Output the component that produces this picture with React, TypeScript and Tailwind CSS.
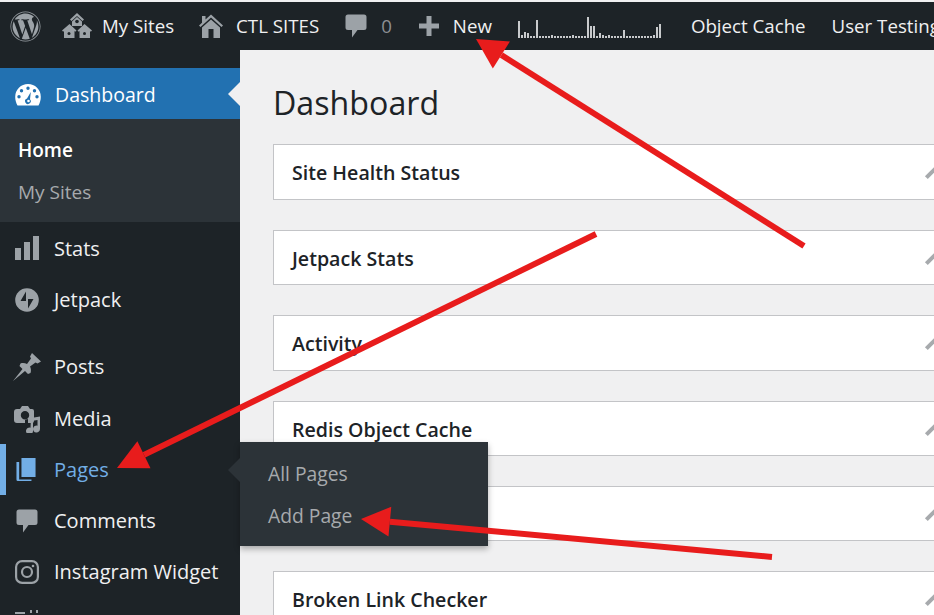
import React from "react";
import { FaWordpress } from "react-icons/fa";

const font = { fontFamily: '"Open Sans", "Noto Sans", sans-serif' };
const bars = [17,3,6,5,2,2,18,2,2,2,2,3,2,2,2,2,2,2,3,2,2,2,2,21,12,12,2,5,3,2,3,2,2,2,2,8,2,2,2,2,2,2,2,2,2,3,11,14];

const Sites = () => (
  <svg width="30" height="26" viewBox="0 0 30 26" fill="#9ca2a7">
    <path d="M15 0l7 6.500-1.500 1.500-5.500-5-5.500 5L8 6.500z" />
    <path d="M15 4l5 4.500V13h-10V8.500z" />
    <circle cx="15" cy="8.500" r="1.800" fill="#1d2327" />
    <path d="M7.500 11l7 6.500-1.200 1.200-.8-.7V25H2v-7l-.8.700L0 17.500z" />
    <path d="M22.500 11l7.500 6.500-1.200 1.200-.8-.7V25H17.500v-7l-.8.700-1.200-1.200z" />
    <rect x="5.500" y="19" width="3" height="3" rx="1.500" fill="#1d2327" />
    <rect x="21" y="19" width="3" height="3" rx="1.500" fill="#1d2327" />
  </svg>
);
const Home = () => (
  <svg width="24" height="24" viewBox="0 0 24 24" fill="#9ca2a7">
    <path d="M12 0.500l12 11-1.500 1.600L12 3.500 1.500 13.100 0 11.500l3-2.700V2h3.500v3.600z" />
    <path d="M12 5.500l9 8V24H3V13.500zM9.500 15v9h5v-9z" fillRule="evenodd" />
  </svg>
);
const Bubble = ({ color = "#9ca2a7" }: { color?: string }) => (
  <svg width="22" height="26" viewBox="0 0 22 25" fill={color}>
    <path d="M3 1h16a2.500 2.500 0 0 1 2.500 2.500v10.500a2.500 2.500 0 0 1-2.500 2.500h-6.500L7 24v-7.500H3A2.500 2.500 0 0 1 .5 14V3.500A2.500 2.500 0 0 1 3 1z" />
  </svg>
);
const Gauge = () => (
  <svg width="26" height="22" viewBox="0 0 26 22" fill="#fff">
    <path fillRule="evenodd" d="M13 0a12.800 12.800 0 0 1 12.800 12.800c0 3.400-.8 6-2.300 8.700H2.500C1 18.800.2 16.200.2 12.800A12.800 12.800 0 0 1 13 0zM13 2.500a1.700 1.700 0 1 0 0 3.400 1.700 1.700 0 0 0 0-3.400zM6.500 5a1.700 1.700 0 1 0 0 3.400 1.700 1.700 0 0 0 0-3.400zM19.500 5a1.700 1.700 0 1 0 0 3.400 1.700 1.700 0 0 0 0-3.400zM4 11a1.700 1.700 0 1 0 0 3.400A1.700 1.700 0 0 0 4 11zM22 11a1.700 1.700 0 1 0 0 3.400 1.700 1.700 0 0 0 0-3.400zM15.800 8l-3.800 6.500a2.800 2.800 0 1 0 3 .8z" />
    <circle cx="13.500" cy="17" r="1.300" />
  </svg>
);
const Stats = () => (
  <svg width="26" height="25" viewBox="0 0 26 25" fill="#9ca2a7">
    <rect x="1" y="12" width="6" height="12" />
    <rect x="10" y="6" width="6" height="18" />
    <rect x="19" y="0" width="6" height="24" />
  </svg>
);
const Jetpack = () => (
  <svg width="24" height="24" viewBox="0 0 24 24">
    <circle cx="12" cy="12" r="11.800" fill="#9ca2a7" />
    <path d="M11 3.500v9.500H5.500zM13 20.500V11h5.500z" fill="#1d2327" />
  </svg>
);
const Pin = () => (
  <svg width="28" height="28" viewBox="0 0 28 28" fill="#9ca2a7">
    <path d="M0 28l9.500-12-3-3 1-2.500c2-.8 4.500-.6 6.500.5l4-5.500-1-2 2-3.500 9 8.500-3.500 2-2-1-5.500 4c1 2 1.300 4.500.5 6.500L15 21l-3-3z" />
  </svg>
);
const Media = () => (
  <svg width="29" height="28" viewBox="0 0 29 28" fill="#9ca2a7">
    <path fillRule="evenodd" d="M4 4h3l2-3h6l2 3h2a2 2 0 0 1 2 2v10a2 2 0 0 1-2 2h-4v-4l-3 1v3H4a3 3 0 0 1-3-3V7a3 3 0 0 1 3-3zM12 6a4.200 4.200 0 1 0 0 8.400A4.200 4.200 0 0 0 12 6z" />
    <path d="M18 13l9-1.500V24a3.500 3.500 0 1 1-2.500-3.300V15l-4.500.8V26a3.500 3.500 0 1 1-2.500-3.300z" />
  </svg>
);
const Pages = () => (
  <svg width="20" height="24" viewBox="0 0 22 24" preserveAspectRatio="none" fill="#72aee6">
    <path d="M6 0h15.500v19H6z" />
    <path d="M3.500 4v17.500H17V23H2a1.500 1.500 0 0 1-1.500-1.500V4z" />
  </svg>
);
const Insta = () => (
  <svg width="24" height="24" viewBox="0 0 24 24" fill="none" stroke="#9ca2a7" strokeWidth="2.200">
    <rect x="1.100" y="1.100" width="21.800" height="21.800" rx="6" />
    <circle cx="12" cy="12" r="5" />
    <circle cx="18" cy="6" r="1.300" fill="#9ca2a7" stroke="none" />
  </svg>
);

function MenuItem({ icon, label, pl = "pl-[15px]" }: { icon: React.ReactNode; label: string; pl?: string }) {
  return (
    <div className="h-[51.300px] flex items-center text-[20px] text-[#f0f0f1]">
      <span className={`w-[54px] shrink-0 ${pl} flex items-center`}>{icon}</span>
      <span>{label}</span>
    </div>
  );
}

function Panel({ title }: { title: string }) {
  return (
    <div className="relative h-[55.400px] shrink-0 mb-[30px] w-[700px] bg-white border border-[#c3c4c7] flex items-center pl-[18px] pt-[2px] text-[19.600px] font-semibold text-[#1d2327]">
      {title}
      <span className="absolute left-[650px] top-[25px] w-[16px] h-[4px] bg-[#a7aaad] -rotate-45" />
    </div>
  );
}

function Arrow({ x1, y1, x2, y2, w = 6, head = 28, hw = 16 }: { x1: number; y1: number; x2: number; y2: number; w?: number; head?: number; hw?: number }) {
  const d = Math.hypot(x2 - x1, y2 - y1);
  const ux = (x2 - x1) / d;
  const uy = (y2 - y1) / d;
  const bx = x2 - ux * head;
  const by = y2 - uy * head;
  const px = -uy;
  const py = ux;
  return (
    <>
      <line x1={x1} y1={y1} x2={bx} y2={by} stroke="#e81c1c" strokeWidth={w} />
      <polygon points={`${x2},${y2} ${bx + px * hw},${by + py * hw} ${bx - px * hw},${by - py * hw}`} fill="#e81c1c" />
    </>
  );
}

export default function App() {
  return (
    <div style={font} className="relative w-[934px] h-[615px] overflow-hidden bg-[#f0f0f1]">
      <div className="h-[2px] bg-[#f0f0f1]" />
      <header className="h-[48px] bg-[#1d2327] flex items-center text-[18.700px] text-[#f0f0f1] whitespace-nowrap">
        <span className="ml-[10px] flex"><FaWordpress size={31} color="#9ca2a7" /></span>
        <span className="ml-[21px] flex"><Sites /></span>
        <span className="ml-[10px]">My Sites</span>
        <span className="ml-[25px] flex"><Home /></span>
        <span className="ml-[13px]">CTL SITES</span>
        <span className="ml-[26px] flex"><Bubble /></span>
        <span className="ml-[14px] text-[#8c8f94]">0</span>
        <span className="ml-[27px] flex">
          <svg width="20" height="20" viewBox="0 0 20 20" fill="#9ca2a7"><path d="M7.500 0h5v7.500H20v5h-7.500V20h-5v-7.500H0v-5h7.500z" /></svg>
        </span>
        <span className="ml-[14px]">New</span>
        <div className="ml-[26px] h-[22px] w-[144px] flex items-end gap-[1px] self-center mt-[2px]">
          {bars.map((h, i) => (
            <span key={i} className="w-[2px] bg-[#c8cacc]" style={{ height: h }} />
          ))}
        </div>
        <span className="ml-[30px]">Object Cache</span>
        <span className="ml-[26px]">User Testing</span>
      </header>
      <div className="flex h-[565px]">
        <aside className="w-[240px] shrink-0 bg-[#1d2327] pt-[18px]">
          <div className="h-[51px] pt-[2px] bg-[#2271b1] flex items-center text-[19.500px] text-white relative">
            <span className="w-[55px] pl-[15px] flex"><Gauge /></span>
            Dashboard
            <span className="absolute right-0 top-[14px] border-y-[12px] border-y-transparent border-r-[12px] border-r-[#f0f0f1]" />
          </div>
          <div className="h-[103px] bg-[#2c3338] pt-[10px] text-[19px]">
            <div className="h-[42px] flex items-center pl-[18px] font-semibold text-white">Home</div>
            <div className="h-[42px] flex items-center pl-[18px] text-[#a7aaad]">My Sites</div>
          </div>
          <div className="pt-[1px]">
            <MenuItem icon={<Stats />} label="Stats" pl="pl-[14px]" />
            <MenuItem icon={<Jetpack />} label="Jetpack" />
          </div>
          <div className="pt-[16px]">
            <MenuItem icon={<Pin />} label="Posts" pl="pl-[13px]" />
            <MenuItem icon={<Media />} label="Media" pl="pl-[13px]" />
            <div className="relative h-[51.300px] flex items-center text-[20px] text-[#72aee6]">
              <span className="absolute left-0 top-0 bottom-0 w-[6px] bg-[#72aee6]" />
              <span className="w-[54px] pl-[16px] flex"><Pages /></span>
              Pages
            </div>
            <MenuItem icon={<Bubble />} label="Comments" pl="pl-[16px]" />
            <MenuItem icon={<Insta />} label="Instagram Widget" />
            <div className="pl-[14px] pt-[12px]">
              <svg width="26" height="24" viewBox="0 0 26 24" fill="#9ca2a7"><path d="M1 2h10v2H1zM16 0h2v3h-2zM22 0h2v3h-2z" /></svg>
            </div>
          </div>
        </aside>
        <main className="flex-1 min-w-0 pl-[33px] overflow-hidden">
          <h1 className="h-[94.400px] pt-[28px] text-[32.200px] leading-[50px] text-[#1d2327]">Dashboard</h1>
          <Panel title="Site Health Status" />
          <Panel title="Jetpack Stats" />
          <Panel title="Activity" />
          <Panel title="Redis Object Cache" />
          <Panel title="" />
          <Panel title="Broken Link Checker" />
        </main>
      </div>

      {/* fly-out submenu */}
      <div className="absolute left-[240px] top-[442px] w-[248px] h-[104px] bg-[#2c3338] shadow-[0_3px_6px_rgba(0,0,0,0.3)] pt-[11px] pl-[28px] text-[19.300px] text-[#a7aaad]">
        <span className="absolute -left-[12px] top-[16px] border-y-[12px] border-y-transparent border-r-[12px] border-r-[#2c3338]" />
        <div className="h-[42px] flex items-center">All Pages</div>
        <div className="h-[42px] flex items-center">Add Page</div>
      </div>

      {/* annotation arrows */}
      <svg className="absolute inset-0" width="934" height="615" viewBox="0 0 934 615">
        <Arrow x1={804} y1={246} x2={476} y2={39} head={30} hw={16} />
        <Arrow x1={596} y1={234} x2={117} y2={468} head={30} hw={15} />
        <Arrow x1={772} y1={557} x2={361} y2={519} head={29} hw={15} />
      </svg>
    </div>
  );
}
